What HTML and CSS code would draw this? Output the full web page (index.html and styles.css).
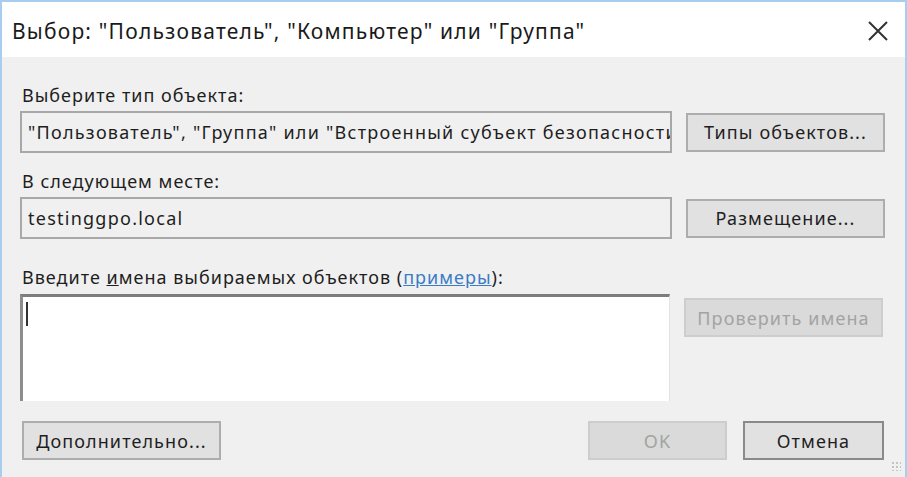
FILE: index.html
```html
<!DOCTYPE html>
<html lang="ru">
<head>
    <meta charset="UTF-8">
    <title>Выбор: "Пользователь", "Компьютер" или "Группа"</title>
    <link rel="stylesheet" href="styles.css">
</head>
<body>
    <div class="dialog">
        <!-- Title bar -->
        <div class="titlebar">
            <span class="title">Выбор: "Пользователь", "Компьютер" или "Группа"</span>
            <svg class="close" width="22" height="22" viewBox="0 0 22 22">
                <path d="M2 2 L20 20 M20 2 L2 20" stroke="#333" stroke-width="2" fill="none"/>
            </svg>
        </div>

        <!-- Body -->
        <div class="content">
            <div class="label first">Выберите тип объекта:</div>
            <div class="row">
                <div class="field">"Пользователь", "Группа" или "Встроенный субъект безопасности"</div>
                <button class="btn">Типы объектов...</button>
            </div>

            <div class="label">В следующем месте:</div>
            <div class="row">
                <div class="field">testinggpo.local</div>
                <button class="btn">Размещение...</button>
            </div>

            <div class="label third">Введите <u>и</u>мена выбираемых объектов (<a href="#">примеры</a>):</div>
            <div class="row top">
                <div class="names"><span class="caret"></span></div>
                <button class="btn check" disabled>Проверить имена</button>
            </div>

            <div class="footer">
                <button class="btn more">Дополнительно...</button>
                <div class="actions">
                    <button class="btn ok" disabled>OK</button>
                    <button class="btn cancel">Отмена</button>
                </div>
            </div>
        </div>
        <div class="grip"></div>
    </div>
</body>
</html>
```

FILE: styles.css
```css
html, body {
    margin: 0;
    height: 100%;
}
body {
    font-family: "Noto Sans", "Liberation Sans", sans-serif;
    color: #1e1e1e;
    background-color: #f0f0f0;
}
.dialog {
    height: 477px;
    box-sizing: border-box;
    border: 2px solid #a9cdee;
    border-bottom: none;
    background-color: #f0f0f0;
    position: relative;
}
.titlebar {
    height: 55px;
    background-color: #fff;
    display: flex;
    align-items: center;
    justify-content: space-between;
    padding: 0 16px 0 10px;
}
.title {
    font-size: 21px;
    letter-spacing: 1.2px;
    color: #1a1a1a;
    padding-top: 2px;
}
.close {
    margin-top: 2px;
}
.content {
    padding: 0 20px 0 18px;
}
.label {
    font-size: 18px;
    letter-spacing: 1px;
    line-height: 22px;
    margin: 17px 0 5px 2px;
}
.label.first {
    margin-top: 27px;
}
.label.third {
    margin-top: 27px;
    margin-bottom: 6px;
}
.label a {
    color: #3a7cc4;
}
.row {
    display: flex;
    align-items: center;
    gap: 14px;
}
.row.top {
    align-items: flex-start;
}
.field {
    width: 652px;
    height: 42px;
    box-sizing: border-box;
    border: 2px solid #a8a8a8;
    padding: 0 6px;
    font-size: 18px;
    letter-spacing: 1.25px;
    line-height: 38px;
    white-space: nowrap;
    overflow: hidden;
}
.btn {
    font-family: inherit;
    font-size: 18px;
    letter-spacing: 1.1px;
    color: #1e1e1e;
    background-color: #e1e1e1;
    border: 2px solid #adadad;
    height: 39px;
    width: 199px;
    padding: 0;
}
.btn:disabled {
    color: #a3a3a3;
    background-color: #dadada;
    border-color: #cdcdcd;
}
.names {
    width: 650px;
    height: 107px;
    box-sizing: border-box;
    background-color: #fff;
    border-top: 3px solid #7d7d7d;
    border-left: 3px solid #8d8d8d;
    border-right: 1px solid #e2e2e2;
    padding: 5px 0 0 3px;
}
.caret {
    display: block;
    width: 2px;
    height: 24px;
    background-color: #333;
}
.check {
    margin-top: 4px;
}
.footer {
    display: flex;
    justify-content: space-between;
    margin-top: 20px;
    padding-left: 2px;
}
.actions {
    display: flex;
    gap: 16px;
    padding-right: 1px;
}
.ok {
    width: 139px;
}
.cancel {
    width: 141px;
    border-color: #8a8a8a;
}
.grip {
    position: absolute;
    right: 4px;
    bottom: 6px;
    width: 10px;
    height: 10px;
    background-image: radial-gradient(#c4c4c4 1px, transparent 1.5px);
    background-size: 4px 4px;
}
```
